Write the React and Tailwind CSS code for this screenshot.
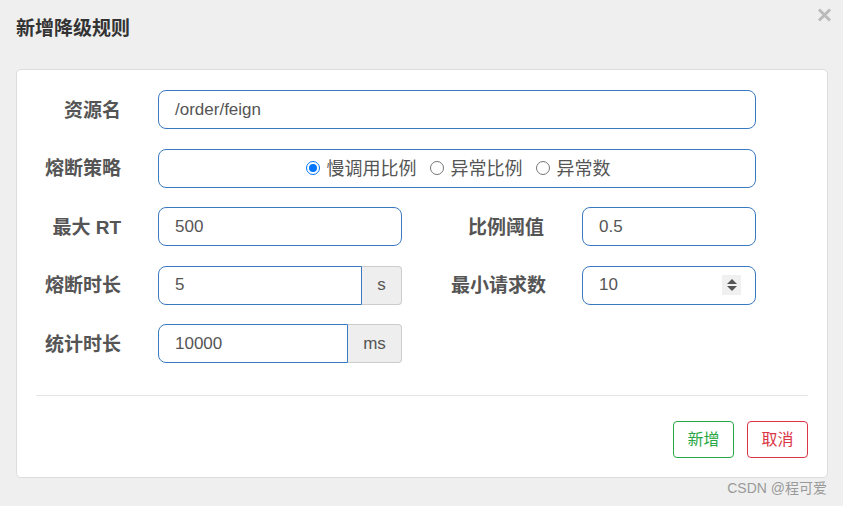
import React from 'react'

const font = { fontFamily: '"Liberation Sans", "Noto Sans CJK SC", sans-serif' }

const Label = ({ children, className = '' }) => (
  <div className={`shrink-0 pt-[3px] text-right text-[19px] font-bold text-[#555] ${className}`}>{children}</div>
)

const Box = ({ children, className = '', rounded = 'rounded-[8px]' }) => (
  <div className={`h-[39px] flex items-center pl-4 border border-[#3a7bbf] bg-white text-[17px] text-[#555] ${rounded} ${className}`}>
    {children}
  </div>
)

const Addon = ({ children, className = '' }) => (
  <div className={`h-[39px] flex items-center justify-center bg-[#eeeeee] border border-l-0 border-[#cccccc] rounded-r-[4px] text-[17px] text-[#555] ${className}`}>
    {children}
  </div>
)

const Radio = ({ checked, label }) => (
  <label className="flex items-center gap-[7px]">
    {checked ? (
      <span className="w-[14px] h-[14px] rounded-full border-[1.5px] border-[#0075ff] flex items-center justify-center">
        <span className="w-[8px] h-[8px] rounded-full bg-[#0075ff]" />
      </span>
    ) : (
      <span className="w-[14px] h-[14px] rounded-full border border-[#767676] bg-white" />
    )}
    <span className="pt-[2px]">{label}</span>
  </label>
)

export default function App() {
  return (
    <div className="w-[843px] h-[506px] bg-[#efefef] relative overflow-hidden" style={font}>
      {/* header */}
      <div className="flex items-center justify-between h-[56px] pl-4 pr-[11px]">
        <h4 className="text-[19px] font-bold text-[#333] pt-[2px]">新增降级规则</h4>
        <svg width="15" height="14" viewBox="0 0 15 14" className="self-start mt-[8px]">
          <path d="M2 1.5 L13 12.5 M13 1.5 L2 12.5" stroke="#bbbbbb" strokeWidth="3" />
        </svg>
      </div>

      {/* body card */}
      <div className="ml-4 mt-[13px] w-[812px] h-[409px] bg-white border border-[#dddddd] rounded-[5px] px-[19px] pt-5">
        <div className="flex flex-col gap-[19.5px]">
          <div className="flex items-center">
            <Label className="w-[85px]">资源名</Label>
            <Box className="ml-[37px] w-[598px]">/order/feign</Box>
          </div>

          <div className="flex items-center">
            <Label className="w-[85px]">熔断策略</Label>
            <Box className="ml-[37px] w-[598px] justify-center pl-0 pr-[14px] gap-[13px] text-[18px]">
              <Radio checked label="慢调用比例" />
              <Radio label="异常比例" />
              <Radio label="异常数" />
            </Box>
          </div>

          <div className="flex items-center">
            <Label className="w-[85px]">最大 RT</Label>
            <Box className="ml-[37px] w-[244px]">500</Box>
            <Label className="w-[142px]">比例阈值</Label>
            <Box className="ml-[38px] w-[174px]">0.5</Box>
          </div>

          <div className="flex items-center">
            <Label className="w-[85px]">熔断时长</Label>
            <div className="ml-[37px] flex w-[244px]">
              <Box className="flex-1" rounded="rounded-l-[8px]">5</Box>
              <Addon className="w-[40px]">s</Addon>
            </div>
            <Label className="w-[144px]">最小请求数</Label>
            <Box className="ml-[36px] w-[174px] justify-between pr-[14px]">
              <span>10</span>
              <span className="w-[19px] h-[20px] bg-[#f0f0f0] flex flex-col items-center justify-center gap-[2px]">
                <svg width="10" height="5" viewBox="0 0 10 5"><path d="M5 0 L10 5 L0 5 Z" fill="#555" /></svg>
                <svg width="10" height="5" viewBox="0 0 10 5"><path d="M0 0 L10 0 L5 5 Z" fill="#555" /></svg>
              </span>
            </Box>
          </div>

          <div className="flex items-center">
            <Label className="w-[85px]">统计时长</Label>
            <div className="ml-[37px] flex w-[244px]">
              <Box className="w-[190px]" rounded="rounded-l-[8px]">10000</Box>
              <Addon className="flex-1">ms</Addon>
            </div>
          </div>
        </div>

        <div className="mt-[32px] border-t border-[#e5e5e5]" />

        <div className="flex justify-end gap-[13px] mt-[25px]">
          <button className="w-[61px] h-[37px] border border-[#28a745] text-[#28a745] rounded-[4px] text-[16px] bg-white">新增</button>
          <button className="w-[61px] h-[37px] border border-[#dc3545] text-[#dc3545] rounded-[4px] text-[16px] bg-white">取消</button>
        </div>
      </div>

      <div className="absolute right-[16px] bottom-[7px] text-[14px] text-[#9a9a9a]">CSDN @程可爱</div>
    </div>
  )
}
